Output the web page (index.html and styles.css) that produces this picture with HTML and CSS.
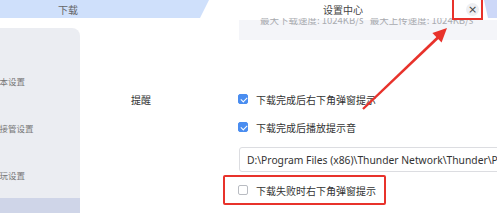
FILE: index.html
```html
<!DOCTYPE html>
<html lang="zh-CN">
<head>
<meta charset="utf-8">
<title>设置中心</title>
<link rel="stylesheet" href="styles.css">
</head>
<body>
<div class="app">
  <div class="header">
    <div class="tab"><span>下载</span></div>
    <div class="title">设置中心</div>
    <div class="close"><span class="close-x">×</span></div>
    <div class="tab-right"></div>
  </div>
  <div class="body">
    <div class="sidebar">
      <div class="side-item">基本设置</div>
      <div class="side-item">下载接管设置</div>
      <div class="side-item">游玩设置</div>
      <div class="side-item active"></div>
    </div>
    <div class="main">
      <div class="speed-box"><span class="speed-text">最大下载速度: 1024KB/s&nbsp;&nbsp;&nbsp;最大上传速度: 1024KB/s</span></div>
      <div class="form">
        <div class="row row-opt">
          <div class="label">提醒</div>
          <div class="opt"><span class="cb on"></span><span>下载完成后右下角弹窗提示</span></div>
        </div>
        <div class="row row-opt">
          <div class="label"></div>
          <div class="opt"><span class="cb on"></span><span>下载完成后播放提示音</span></div>
        </div>
        <div class="row row-path">
          <div class="label"></div>
          <div class="path">D:\Program Files (x86)\Thunder Network\Thunder\Program\resource\sound.wav</div>
        </div>
        <div class="row row-opt row-last">
          <div class="label"></div>
          <div class="opt"><span class="cb"></span><span>下载失败时右下角弹窗提示</span></div>
        </div>
      </div>
    </div>
  </div>
  <div class="mark mark-close"></div>
  <div class="mark mark-row"></div>
  <svg class="arrow" width="497" height="213" viewBox="0 0 497 213">
    <polygon points="362.2,108.3 363.8,109.7 439.5,38.1 437.5,36.0" fill="#e8322b"/>
    <polygon points="447,28 441.6,42.4 432.4,33.0" fill="#e8322b"/>
  </svg>
</div>
</body>
</html>
```
FILE: styles.css
```css
* { box-sizing: border-box; }
html, body { margin: 0; padding: 0; background: #fff; }
.app {
  position: relative;
  width: 497px;
  height: 213px;
  overflow: hidden;
  background: #fff;
  font-family: "Noto Sans CJK SC", "Noto Sans", sans-serif;
  color: #333;
}
.header {
  display: flex;
  height: 18px;
}
.tab {
  width: 209px;
  height: 18px;
  background: #cfe0fb;
  clip-path: polygon(0 0, 100% 0, calc(100% - 9px) 100%, 0 100%);
  display: flex;
  align-items: center;
  padding-left: 58px;
  font-size: 10px;
  color: #666;
}
.title {
  width: 243px;
  display: flex;
  align-items: center;
  padding-left: 114px;
  font-size: 10px;
  color: #444;
}
.close {
  width: 30px;
  display: flex;
  align-items: center;
  justify-content: flex-end;
  padding-right: 3px;
}
.close-x {
  width: 13px;
  height: 13px;
  border-radius: 50%;
  background: #eeeff2;
  display: flex;
  align-items: center;
  justify-content: center;
  font-family: "DejaVu Sans", sans-serif;
  font-size: 11px;
  line-height: 1;
  color: #444;
}
.tab-right {
  flex: 1;
  background: #cdd8f8;
  clip-path: polygon(2px 0, 100% 0, 100% 100%, 6px 100%);
}
.body {
  display: flex;
  height: 195px;
  overflow: hidden;
}
.sidebar {
  width: 80px;
  margin-top: 10px;
  background: #ebedf2;
  border-top-right-radius: 8px;
  padding-top: 29px;
  display: flex;
  flex-direction: column;
}
.side-item {
  height: 47px;
  display: flex;
  align-items: center;
  justify-content: center;
  width: 16px;
  white-space: nowrap;
  font-size: 8.5px;
  color: #777;
}
.side-item.active {
  width: 80px;
  flex: 1;
  background: #cfd5e8;
}
.main {
  flex: 1;
  overflow: hidden;
}
.speed-box {
  display: flow-root;
  margin-top: 2px;
  margin-left: 159px;
  height: 20px;
  background: #f4f5f9;
  padding-left: 21px;
  white-space: nowrap;
}
.speed-text {
  display: block;
  font-size: 9.5px;
  line-height: 10px;
  margin-top: -5px;
  color: #a9abb0;
}
.form {
  display: flex;
  flex-direction: column;
  margin-top: 45px;
}
.row {
  display: flex;
}
.row-opt { height: 28px; }
.row-path { height: 25px; margin-top: 6px; }
.row-last { margin-top: 4px; }
.label {
  width: 158px;
  flex: none;
  padding-left: 51px;
  display: flex;
  align-items: center;
  font-size: 10px;
  color: #333;
}
.opt {
  display: flex;
  align-items: center;
  gap: 8px;
  font-size: 10px;
  color: #333;
  white-space: nowrap;
}
.path {
  margin-left: 1px;
  width: 320px;
  flex: none;
  height: 25px;
  border: 1px solid #dcdde1;
  border-radius: 3px;
  padding-left: 7px;
  display: flex;
  align-items: center;
  font-family: "Noto Sans", sans-serif;
  font-size: 10.3px;
  color: #333;
  white-space: nowrap;
  overflow: hidden;
}
.cb {
  width: 10px;
  height: 10px;
  border-radius: 2px;
  border: 1px solid #b9bcc2;
  background: #fff;
  flex: none;
  position: relative;
}
.cb.on {
  background: #4a8df0;
  border-color: #4a8df0;
}
.cb.on::after {
  content: "";
  position: absolute;
  left: 2.5px;
  top: 0.5px;
  width: 3px;
  height: 5px;
  border-right: 1.5px solid #fff;
  border-bottom: 1.5px solid #fff;
  transform: rotate(45deg);
}
.mark {
  position: absolute;
  border: 2px solid #e8322b;
}
.mark-close {
  left: 452px;
  top: -4px;
  width: 31px;
  height: 24px;
}
.mark-row {
  left: 223px;
  top: 175px;
  width: 163px;
  height: 30px;
  border-radius: 2px;
}
.arrow {
  position: absolute;
  left: 0;
  top: 0;
  pointer-events: none;
}
```
